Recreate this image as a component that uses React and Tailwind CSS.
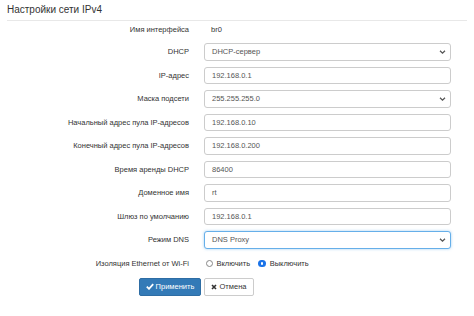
import React from 'react';

const rows = [
  { label: 'DHCP', value: 'DHCP-сервер', select: true },
  { label: 'IP-адрес', value: '192.168.0.1' },
  { label: 'Маска подсети', value: '255.255.255.0', select: true },
  { label: 'Начальный адрес пула IP-адресов', value: '192.168.0.10' },
  { label: 'Конечный адрес пула IP-адресов', value: '192.168.0.200' },
  { label: 'Время аренды DHCP', value: '86400' },
  { label: 'Доменное имя', value: 'rt' },
  { label: 'Шлюз по умолчанию', value: '192.168.0.1' },
  { label: 'Режим DNS', value: 'DNS Proxy', select: true, focus: true },
];

function Chevron() {
  return (
    <svg width="7" height="5" viewBox="0 0 7 5" className="absolute right-[4px] top-1/2 -translate-y-1/2">
      <path d="M1 1.2 L3.5 3.6 L6 1.2" fill="none" stroke="#555" strokeWidth="1.3" />
    </svg>
  );
}

function Field({ row }) {
  return (
    <div
      className={
        'relative flex h-[17.5px] w-[247px] items-center rounded-[3px] border bg-white pl-[7px] text-[7.5px] text-[#555] ' +
        (row.focus ? 'border-[#66afe9] shadow-[0_0_3px_rgba(102,175,233,0.6)]' : 'border-[#ccc]')
      }
    >
      {row.value}
      {row.select && <Chevron />}
    </div>
  );
}

export default function App() {
  return (
    <div className="h-[316px] w-[474px] bg-white px-[7px] text-[#333]" style={{ fontFamily: '"Liberation Sans", Arial, sans-serif' }}>
      <div className="flex h-[20.5px] items-end border-b border-[#e8e8e8] pb-[3px] text-[10px] text-[#333]">
        Настройки сети IPv4
      </div>

      <div className="mt-[2.5px] flex flex-col gap-[6px]">
        <div className="flex h-[14px] items-center">
          <div className="w-[182px] text-right text-[7.5px]">Имя интерфейса</div>
          <div className="ml-[22px] text-[7.5px]">br0</div>
        </div>
        {rows.map((row) => (
          <div key={row.label} className="flex items-center">
            <div className="w-[182px] text-right text-[7.5px]">{row.label}</div>
            <div className="ml-[15px]">
              <Field row={row} />
            </div>
          </div>
        ))}
        <div className="flex h-[17.5px] items-center">
          <div className="w-[182px] text-right text-[7.5px]">Изоляция Ethernet от Wi-Fi</div>
          <div className="ml-[15px] flex items-center text-[7.5px]">
            <span className="ml-[1.5px] inline-block h-[7px] w-[7px] rounded-full border border-[#888] bg-white" />
            <span className="ml-[4px]">Включить</span>
            <span className="ml-[8px] flex h-[7.5px] w-[7.5px] items-center justify-center rounded-full bg-[#1a73e8]">
              <span className="h-[2.5px] w-[2.5px] rounded-full bg-white" />
            </span>
            <span className="ml-[4px]">Выключить</span>
          </div>
        </div>
        <div className="flex items-center gap-[2.5px] pl-[132px]">
          <button className="flex h-[17.5px] w-[62px] items-center justify-center gap-[2px] rounded-[2px] border border-[#2e6da4] bg-[#337ab7] text-[7.5px] text-white">
            <svg width="8" height="7" viewBox="0 0 8 7">
              <path d="M0.8 3.6 L3 5.8 L7.2 1.2" fill="none" stroke="#fff" strokeWidth="1.8" />
            </svg>
            Применить
          </button>
          <button className="flex h-[17.5px] w-[50px] items-center justify-center gap-[3px] rounded-[2px] border border-[#ccc] bg-white text-[7.5px] text-[#333]">
            <svg width="6" height="6" viewBox="0 0 6 6">
              <path d="M1 1 L5 5 M5 1 L1 5" fill="none" stroke="#333" strokeWidth="1.6" />
            </svg>
            Отмена
          </button>
        </div>
      </div>
    </div>
  );
}
